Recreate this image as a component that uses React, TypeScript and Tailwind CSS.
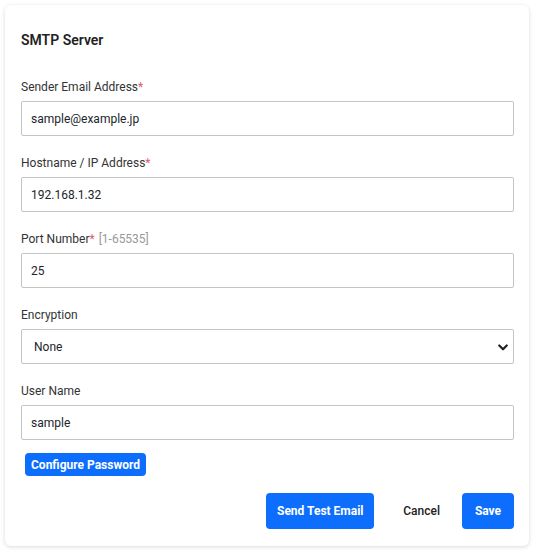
import { useState } from 'react';

interface Field {
  id: string;
  label: string;
  required?: boolean;
  hint?: string;
  value: string;
}

const fields: Field[] = [
  { id: 'sender', label: 'Sender Email Address', required: true, value: 'sample@example.jp' },
  { id: 'host', label: 'Hostname / IP Address', required: true, value: '192.168.1.32' },
  { id: 'port', label: 'Port Number', required: true, hint: '[1-65535]', value: '25' },
];

const inputClass =
  'w-full h-[35px] border border-[#c4c4c4] rounded-[2px] px-[9px] text-[12px] text-[#212529] bg-white outline-none';

function Label({ text, required, hint }: { text: string; required?: boolean; hint?: string }) {
  return (
    <label className="block text-[12px] leading-[20px] text-[#333] mb-[4px]">
      {text}
      {required && <span className="text-[#e05a6a]">*</span>}
      {hint && <span className="text-[#999] ml-1">{hint}</span>}
    </label>
  );
}

function App() {
  const [values, setValues] = useState<Record<string, string>>(
    Object.fromEntries(fields.map(f => [f.id, f.value]))
  );
  const [encryption, setEncryption] = useState('none');
  const [userName, setUserName] = useState('sample');

  return (
    <div className="min-h-screen bg-white p-[5px]" style={{ fontFamily: 'Roboto, "Noto Sans", sans-serif' }}>
      <div className="w-[524px] rounded-md bg-white shadow-[0_1px_4px_rgba(0,0,0,0.15)] pl-4 pr-[15px] pt-[24px] pb-[17px]">
        <h2 className="text-[14px] leading-[22px] font-semibold text-[#222] mb-[26px]">SMTP Server</h2>

        {fields.map(f => (
          <div key={f.id} className="mb-[17px]">
            <Label text={f.label} required={f.required} hint={f.hint} />
            <input
              className={inputClass}
              value={values[f.id]}
              onChange={e => setValues({ ...values, [f.id]: e.target.value })}
            />
          </div>
        ))}

        <div className="mb-[17px]">
          <Label text="Encryption" />
          <div className="relative">
            <select
              className={`${inputClass} appearance-none pl-[12px]`}
              value={encryption}
              onChange={e => setEncryption(e.target.value)}
            >
              <option value="none">None</option>
              <option value="ssl">SSL/TLS</option>
              <option value="starttls">STARTTLS</option>
            </select>
            <svg
              className="absolute right-[5px] top-1/2 -translate-y-1/2 w-[12px] h-[12px] pointer-events-none text-[#222]"
              viewBox="0 0 16 16"
              fill="none"
              stroke="currentColor"
              strokeWidth={3}
              strokeLinecap="round"
              strokeLinejoin="round"
            >
              <path d="M3 6l5 5 5-5" />
            </svg>
          </div>
        </div>

        <div>
          <Label text="User Name" />
          <input className={inputClass} value={userName} onChange={e => setUserName(e.target.value)} />
        </div>

        <button className="mt-[13px] ml-[4px] h-[23px] px-[6px] rounded-[4px] bg-[#0d6efd] text-white text-[12px] font-bold">
          Configure Password
        </button>

        <div className="mt-[17px] flex justify-end items-center">
          <button className="h-[36px] w-[108px] rounded-[4px] bg-[#0d6efd] text-white text-[12px] font-bold">
            Send Test Email
          </button>
          <button className="h-[36px] ml-[9px] mr-[2px] px-5 text-[12px] font-medium text-[#222]">Cancel</button>
          <button className="h-[36px] w-[52px] rounded-[4px] bg-[#0d6efd] text-white text-[12px] font-bold">
            Save
          </button>
        </div>
      </div>
    </div>
  );
}

export default App;
